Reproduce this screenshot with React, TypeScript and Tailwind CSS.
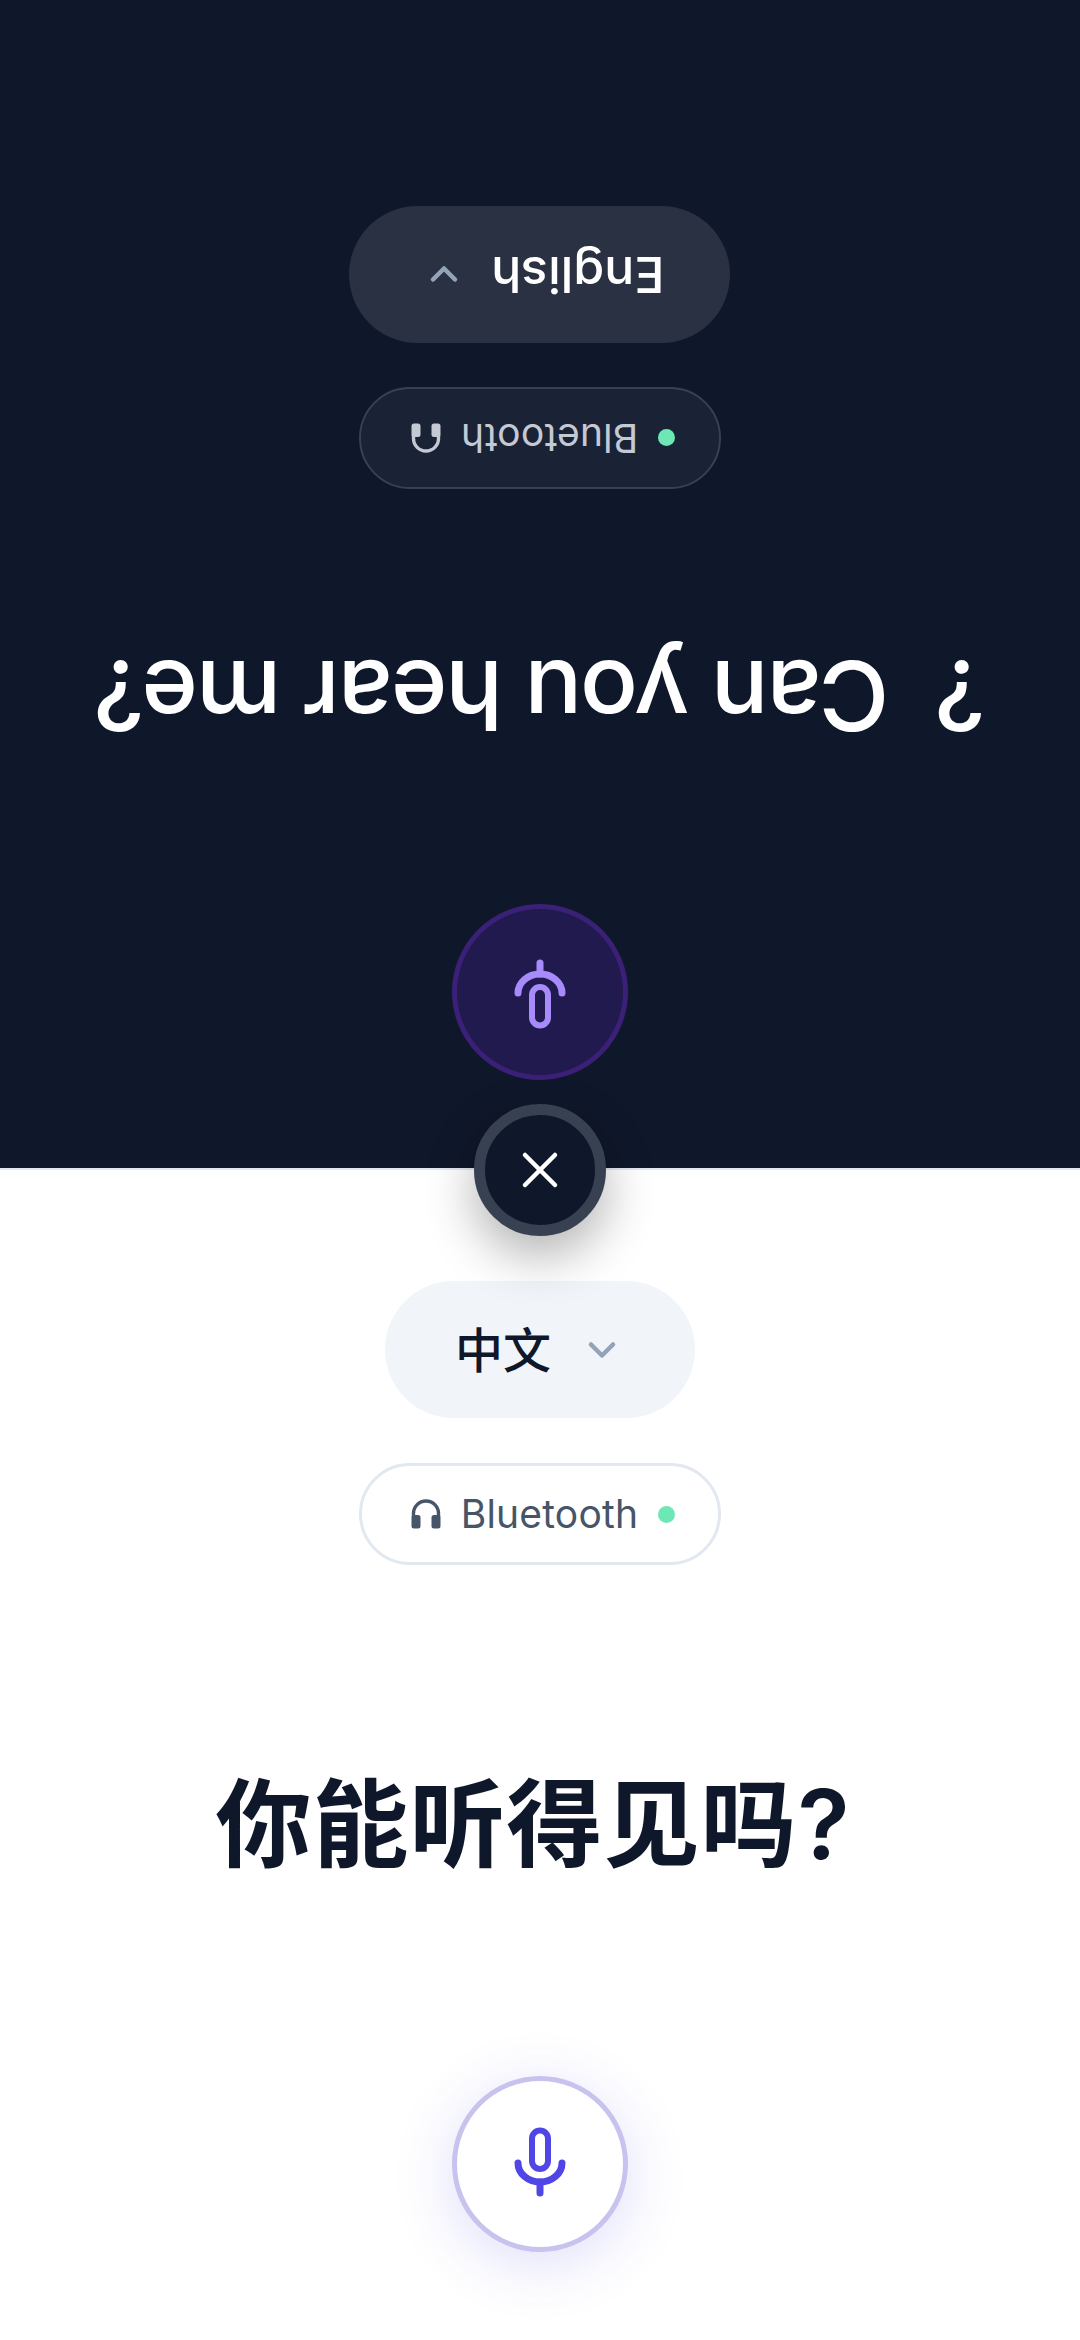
import { ChevronDown, X } from 'lucide-react';

const FONT = "font-['Inter','Noto_Sans_CJK_SC',sans-serif]";

const MicIcon = () => (
  <svg width="80" height="80" viewBox="0 0 80 80" fill="none" stroke="currentColor" strokeLinecap="round">
    <rect x="32" y="6.5" width="16" height="38.5" rx="8" strokeWidth="6" />
    <path d="M18 39A22 19 0 0 0 62 39" strokeWidth="7" />
    <path d="M40 58V69" strokeWidth="7" />
  </svg>
);

const HeadphonesIcon = ({ className }: { className: string }) => (
  <svg width="30" height="30" viewBox="0 0 30 30" fill="none" className={className}>
    <path d="M2.5 18V14.5a12.5 12.5 0 0 1 25 0V18" stroke="currentColor" strokeWidth="3.4" />
    <rect x="0.5" y="16" width="9" height="13.5" rx="2.5" fill="currentColor" />
    <rect x="20.5" y="16" width="9" height="13.5" rx="2.5" fill="currentColor" />
  </svg>
);

const Panel = ({ language, prompt, dark }: { language: string; prompt: string; dark: boolean }) => (
  <section
    className={`flex flex-col items-center ${
      dark
        ? 'h-[1168px] rotate-180 flex-col-reverse bg-[#0f172a] pt-[88px] pb-[206px]'
        : 'flex-1 border-t-2 border-[#e2e8f0] bg-white pt-[111px] pb-[88px]'
    }`}
  >
    <button
      className={`flex h-[137px] items-center rounded-full font-medium ${
        dark
          ? 'w-[381px] bg-[#293142] pl-[66px] text-[50px] text-white'
          : 'w-[310px] bg-[#f1f5f9] pl-[70px] pt-[3px] text-[48px] text-[#0f172a]'
      }`}
    >
      <span>{language}</span>
      <ChevronDown size={44} strokeWidth={2.5} className={`text-[#94a3b8] ${dark ? 'ml-[25px]' : 'ml-[29px] -mt-[3px]'}`} />
    </button>

    <div
      className={`flex h-[102px] w-[362px] items-center justify-center gap-[20px] rounded-full text-[39px] ${
        dark
          ? 'mb-[44px] flex-row-reverse border-2 border-[#374151] bg-[#1a2335] pr-[6px] text-[#c4c9d4]'
          : 'mt-[45px] border-[3px] border-[#e2e8f0] bg-white pl-[6px] text-[#475569]'
      }`}
    >
      <HeadphonesIcon className={dark ? 'text-[#c4c9d4]' : 'text-[#475569]'} />
      <span className="tracking-[0.2px]">Bluetooth</span>
      <span className="h-[17px] w-[17px] rounded-full bg-[#6ee7b7]" />
    </div>

    <div className="flex flex-1 items-center justify-center">
      <h1
        className={`whitespace-pre text-[96px] leading-none ${
          dark ? 'font-medium tracking-[-2.1px] text-white' : 'pr-[14px] pt-[6px] font-semibold tracking-[1px] text-[#0f172a]'
        }`}
      >
        {prompt}
      </h1>
    </div>

    <button
      className={`flex h-[176px] w-[176px] items-center justify-center rounded-full border-[5px] ${
        dark
          ? 'border-[#3b2078] bg-[#211a4e] text-[#a78bfa]'
          : 'border-[#c7c3ee] bg-white text-[#4f46e5] shadow-[0_12px_60px_rgba(79,70,229,0.18)]'
      }`}
    >
      <MicIcon />
    </button>
  </section>
);

export default function App() {
  return (
    <main className={`relative flex h-[2340px] w-[1080px] flex-col overflow-hidden bg-white ${FONT}`}>
      <Panel dark language="English" prompt="?  Can you hear me?" />
      <Panel dark={false} language="中文" prompt="你能听得见吗?" />

      {/* close button sits over the seam */}
      <button className="absolute left-[474px] top-[1104px] flex h-[132px] w-[132px] items-center justify-center rounded-full border-[11px] border-[#374151] bg-[#0f172a] text-white shadow-[0_20px_50px_rgba(0,0,0,0.3)]">
        <X size={60} strokeWidth={1.8} />
      </button>
    </main>
  );
}
